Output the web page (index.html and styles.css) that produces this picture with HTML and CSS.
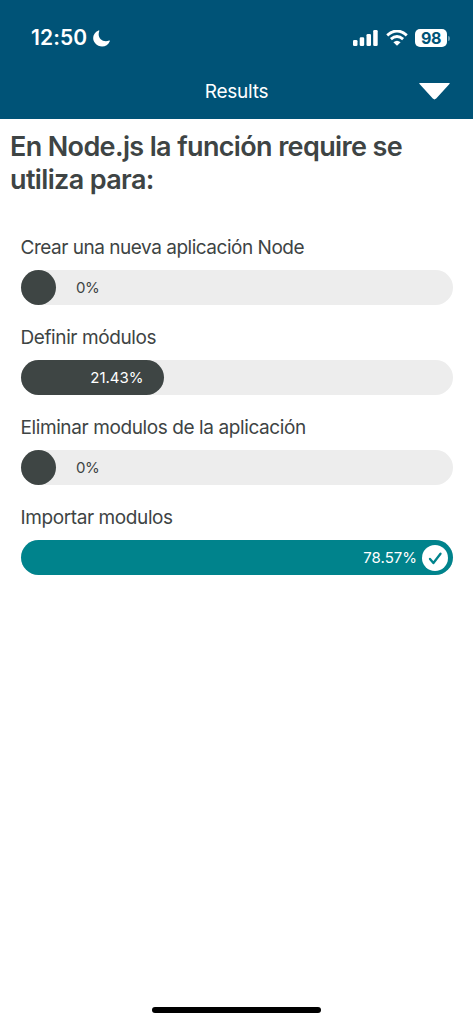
FILE: index.html
```
<!DOCTYPE html>
<html lang="es">
<head>
<meta charset="utf-8">
<meta name="viewport" content="width=device-width, initial-scale=1">
<title>Results</title>
<link rel="stylesheet" href="styles.css">
</head>
<body>
<div class="screen">
  <header class="header">
    <div class="status">
      <div class="clock">
        <span class="time">12:50</span>
        <svg class="moon" viewBox="0 0 17 17"><path d="M5.600.4C-.2 2.600-1.400 9.400 2.200 13.300C6.500 18.300 14.600 17.300 16.800 11.200C16.900 10.700 16.600 10.500 16.200 10.600C9.500 13 3.700 7.800 6.300 1C6.400.5 6.100.2 5.600.4Z"/></svg>
      </div>
      <div class="indicators">
        <svg class="signal" viewBox="0 0 25 16"><rect y="10" width="4.500" height="6" rx="1.300"/><rect x="6.700" y="7.300" width="4.500" height="8.700" rx="1.300"/><rect x="13.500" y="4" width="4.500" height="12" rx="1.300"/><rect x="20.200" y="0" width="4.500" height="16" rx="1.300"/></svg>
        <svg class="wifi" viewBox="0 0 22 16"><path class="arc" d="M1.200 5.300Q11-3.200 20.800 5.300M4.900 9.100Q11 3.800 17.100 9.100"/><path d="M7.400 12.200Q11 9.200 14.600 12.200L11 15.700Z"/></svg>
        <div class="battery"><span class="level">98</span></div>
        <span class="cap"></span>
      </div>
    </div>
    <div class="navbar">
      <span class="nav-title">Results</span>
      <svg class="caret" viewBox="0 0 31 17"><path d="M1 0H30Q31.500 0 30.200 1.300L17.200 15.600Q15.500 17.200 13.800 15.600L.8 1.300Q-.5 0 1 0Z"/></svg>
    </div>
  </header>
  <main class="content">
    <h1 class="question">En Node.js la función require se<br>utiliza para:</h1>
    <section class="answers">
      <div class="answer"><p class="label tight">Crear una nueva aplicación Node</p>
        <div class="track"><div class="fill empty"></div><span class="value">0%</span></div></div>
      <div class="answer"><p class="label">Definir módulos</p>
        <div class="track"><div class="fill partial"><span class="value">21.43%</span></div></div></div>
      <div class="answer"><p class="label">Eliminar modulos de la aplicación</p>
        <div class="track"><div class="fill empty"></div><span class="value">0%</span></div></div>
      <div class="answer"><p class="label">Importar modulos</p>
        <div class="track"><div class="fill correct"><span class="value">78.57%</span><svg class="check" viewBox="0 0 26 26"><circle cx="13" cy="13" r="13"/><path d="M8 14L11.400 18L18.500 8.700"/></svg></div></div></div>
    </section>
  </main>
  <div class="home-indicator"></div>
</div>
</body>
</html>
```
FILE: styles.css
```
* { box-sizing: border-box; }
body { margin: 0; background: #fff; color: #3e4444; font-family: Inter, "Liberation Sans", sans-serif; }
svg { display: block; flex: none; }
.screen { display: flex; flex-direction: column; height: 1024px; }
.header { height: 119px; background: #005377; color: #fff; padding-top: 26px; }
.status { display: flex; justify-content: space-between; height: 24px; padding: 0 23px 0 31px; }
.clock, .indicators { display: flex; align-items: center; }
.clock { gap: 6px; }
.time { font-size: 21px; font-weight: 600; line-height: 24px; letter-spacing: 0.1px; }
.moon { width: 17px; height: 17px; fill: #fff; }
.signal { width: 25px; height: 16px; fill: #fff; }
.wifi { width: 22px; height: 16px; fill: #fff; margin-left: 8px; }
.arc { fill: none; stroke: #fff; stroke-width: 2.9; }
.battery { width: 32px; height: 18px; margin-left: 7px; border-radius: 5px; background: #fff; color: #005377; display: flex; align-items: center; justify-content: center; }
.level { font-size: 16px; font-weight: 700; line-height: 18px; letter-spacing: -0.3px; }
.cap { width: 2px; height: 5px; margin-left: 1px; border-radius: 0 2px 2px 0; background: #6699ae; }
.navbar { display: grid; grid-template-columns: 1fr auto 1fr; align-items: center; height: 24px; margin-top: 29px; padding: 0 23px; }
.nav-title { grid-column: 2; font-size: 19px; line-height: 24px; padding-top: 1px; letter-spacing: -0.25px; }
.caret { justify-self: end; width: 31px; height: 17px; fill: #fff; }
.content { flex: 1; padding: 11px 10px 0; }
.question { margin: 0; font-size: 27px; line-height: 33px; font-weight: 600; letter-spacing: -0.64px; white-space: nowrap; }
.answers { display: flex; flex-direction: column; gap: 21px; padding: 40px 10.5px 0 10.5px; }
.answer { display: flex; flex-direction: column; gap: 10px; }
.label { margin: 0; font-size: 19px; line-height: 24px; letter-spacing: -0.4px; white-space: nowrap; }
.tight { letter-spacing: -0.48px; }
.track { display: flex; align-items: center; height: 35px; border-radius: 18px; background: #ededed; }
.fill { height: 35px; border-radius: 18px; background: #3e4544; display: flex; align-items: center; justify-content: flex-end; color: #fff; }
.value { font-size: 15px; line-height: 20px; }
.empty { width: 35.5px; margin-right: 20px; }
.empty + .value { letter-spacing: -0.4px; }
.partial { width: 143.5px; padding-right: 20.5px; }
.correct { width: 100%; padding-right: 4.5px; gap: 5px; background: #00838c; }
.check { width: 26px; height: 26px; fill: #fff; }
.check path { fill: none; stroke: #00838c; stroke-width: 2.3; stroke-linecap: round; stroke-linejoin: round; }
.home-indicator { width: 169px; height: 6px; margin: 0 auto 11px; border-radius: 3px; background: #000; }
```
